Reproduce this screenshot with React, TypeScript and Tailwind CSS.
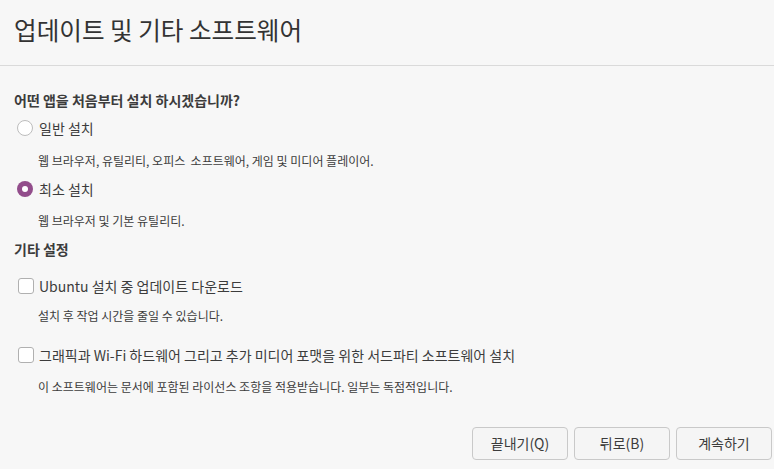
import React from "react";

const font = { fontFamily: '"Noto Sans CJK KR", "Noto Sans", sans-serif' };

function Radio({ checked }: { checked: boolean }) {
  return checked ? (
    <span className="w-[16px] h-[16px] rounded-full bg-[#924d8b] flex items-center justify-center shrink-0">
      <span className="w-[6px] h-[6px] rounded-full bg-white" />
    </span>
  ) : (
    <span className="w-[16px] h-[16px] rounded-full border border-[#bdbdbd] bg-white shrink-0" />
  );
}

function Check() {
  return <span className="w-[16px] h-[16px] rounded-[3px] border border-[#b0b0b0] bg-white shrink-0" />;
}

export default function App() {
  return (
    <div className="w-[774px] h-[469px] bg-[#f7f7f7] text-[#3c3c3c] flex flex-col overflow-hidden" style={font}>
      <div className="h-[66px] shrink-0 border-b border-[#dadada] flex items-center pl-[14px] pb-[6px]">
        <span className="text-[24.6px] leading-none text-[#333]">업데이트 및 기타 소프트웨어</span>
      </div>
      <div className="flex flex-col pl-[14px] pt-[24px]">
        <div className="text-[14px] font-bold leading-[20px] h-[20px]">어떤 앱을 처음부터 설치 하시겠습니까?</div>
        <div className="flex items-center gap-[6px] pl-[3px] mt-[8px] h-[20px]">
          <Radio checked={false} />
          <span className="text-[14px] leading-[20px]">일반 설치</span>
        </div>
        <div className="pl-[24px] mt-[14px] text-[12px] leading-[18px] h-[18px]">웹 브라우저, 유틸리티, 오피스&nbsp; 소프트웨어, 게임 및 미디어 플레이어.</div>
        <div className="flex items-center gap-[6px] pl-[3px] mt-[9px] h-[20px]">
          <Radio checked={true} />
          <span className="text-[14px] leading-[20px]">최소 설치</span>
        </div>
        <div className="pl-[24px] mt-[13px] text-[12px] leading-[18px] h-[18px]">웹 브라우저 및 기본 유틸리티.</div>
        <div className="text-[14px] font-bold leading-[20px] h-[20px] mt-[9px]">기타 설정</div>
        <div className="flex items-center gap-[5px] pl-[4px] mt-[17px] h-[20px]">
          <Check />
          <span className="text-[14px] leading-[20px]">Ubuntu 설치 중 업데이트 다운로드</span>
        </div>
        <div className="pl-[24px] mt-[11px] text-[12px] leading-[18px] h-[18px]">설치 후 작업 시간을 줄일 수 있습니다.</div>
        <div className="flex items-center gap-[5px] pl-[4px] mt-[20px] h-[20px]">
          <Check />
          <span className="text-[14px] leading-[20px]">그래픽과 Wi-Fi 하드웨어 그리고 추가 미디어 포맷을 위한 서드파티 소프트웨어 설치</span>
        </div>
        <div className="pl-[24px] mt-[13px] text-[12px] leading-[18px] h-[18px]">이 소프트웨어는 문서에 포함된 라이선스 조항을 적용받습니다. 일부는 독점적입니다.</div>
      </div>
      <div className="flex justify-end gap-[6px] pr-[2px] mt-auto mb-[9px]">
        {["끝내기(Q)", "뒤로(B)", "계속하기"].map((t) => (
          <button key={t} className="w-[96px] h-[33px] rounded-[4px] border border-[#c9c9c9] bg-[#f5f5f5] text-[14px] text-[#3c3c3c] flex items-center justify-center" style={font}>
            {t}
          </button>
        ))}
      </div>
    </div>
  );
}
